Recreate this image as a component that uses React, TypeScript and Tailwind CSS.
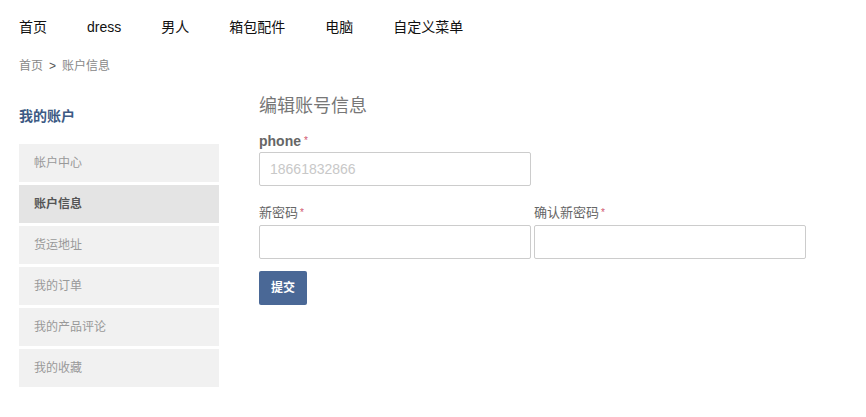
import React from "react";

const navItems = ["首页", "dress", "男人", "箱包配件", "电脑", "自定义菜单"];
const sideItems = ["帐户中心", "账户信息", "货运地址", "我的订单", "我的产品评论", "我的收藏"];

export default function App() {
  const font = { fontFamily: '"Liberation Sans", Arial, "Noto Sans CJK SC", sans-serif' };
  return (
    <div className="w-[866px] h-[417px] bg-white overflow-hidden" style={font}>
      <nav className="h-[54px] pl-[19px] flex items-center gap-[40px] text-[14px] text-[#111]">
        {navItems.map((n) => (
          <span key={n} className="leading-[20px]">{n}</span>
        ))}
      </nav>
      <div className="h-[22px] mt-[1px] pl-[19px] flex items-center text-[12px] text-[#888] leading-[20px]">
        <span>首页</span>
        <span className="mx-[6px] text-[#555]">&gt;</span>
        <span>账户信息</span>
      </div>
      <div className="flex pl-[19px]">
        <aside className="w-[200px]">
          <div className="mt-[29px] h-[20px] leading-[20px] text-[14px] font-bold text-[#3d5a84]">我的账户</div>
          <ul className="mt-[18px] flex flex-col gap-[3px]">
            {sideItems.map((s, i) => (
              <li
                key={s}
                className={
                  "h-[38px] pl-[15px] flex items-center text-[12px] " +
                  (i === 1 ? "bg-[#e4e4e4] text-[#555] font-bold" : "bg-[#f1f1f1] text-[#999]")
                }
              >
                {s}
              </li>
            ))}
          </ul>
        </aside>
        <main className="ml-[40px] w-[547px]">
          <h1 className="mt-[17px] h-[24px] leading-[24px] text-[18px] text-[#777]">编辑账号信息</h1>
          <div className="mt-[13px] h-[20px] leading-[20px] text-[14px] font-bold text-[#666]">
            phone<span className="ml-[3px] text-[10px] font-normal text-[#d0566e] align-top">*</span>
          </div>
          <div className="mt-[1px] w-[272px] h-[34px] border border-[#ccc] rounded-[2px] pl-[10px] flex items-center text-[14px] text-[#c8c8c8]">
            18661832866
          </div>
          <div className="mt-[17px] flex gap-[3px]">
            {["新密码", "确认新密码"].map((l) => (
              <div key={l} className="w-[272px]">
                <div className="h-[20px] leading-[20px] text-[13px] text-[#666]">
                  {l}
                  <span className="ml-[2px] text-[10px] text-[#d0566e] align-top">*</span>
                </div>
                <div className="mt-[2px] h-[34px] border border-[#ccc] rounded-[2px] bg-white" />
              </div>
            ))}
          </div>
          <button className="mt-[12px] w-[48px] h-[34px] rounded-[2px] bg-[#4a6896] text-white text-[12px] font-bold flex items-center justify-center">
            提交
          </button>
        </main>
      </div>
    </div>
  );
}
